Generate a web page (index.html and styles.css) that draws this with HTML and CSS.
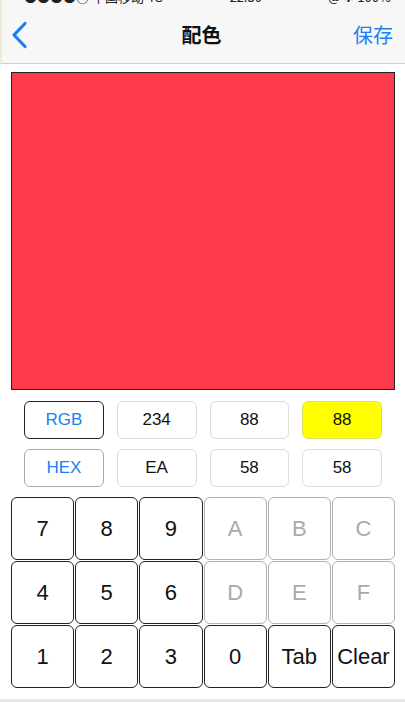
FILE: index.html
```html
<!DOCTYPE html>
<html lang="zh">
<head>
<meta charset="utf-8">
<link rel="stylesheet" href="styles.css">
</head>
<body>
<div class="app">
  <header class="nav">
    <div class="status"><div class="status-line"><span>●●●●○ 中国移动 4G</span><span>22:30</span><span>@ ✱ 100%</span></div></div>
    <div class="nav-row">
      <button class="back" aria-label="返回">
        <svg width="20" height="28" viewBox="0 0 20 28"><path d="M15 2.5 L4 14 L15 25.5" fill="none" stroke="#1a7ff5" stroke-width="3.2" stroke-linecap="round" stroke-linejoin="round"/></svg>
      </button>
      <h1 class="title">配色</h1>
      <button class="save">保存</button>
    </div>
  </header>
  <main class="content">
    <div class="swatch" style="background:#fd3a4b"></div>
    <div class="values">
      <div class="mode mode-active">RGB</div>
      <div class="val">234</div>
      <div class="val">88</div>
      <div class="val val-sel">88</div>
      <div class="mode">HEX</div>
      <div class="val">EA</div>
      <div class="val">58</div>
      <div class="val">58</div>
    </div>
    <div class="keypad">
      <div class="key">7</div><div class="key">8</div><div class="key">9</div>
      <div class="key key-off">A</div><div class="key key-off">B</div><div class="key key-off">C</div>
      <div class="key">4</div><div class="key">5</div><div class="key">6</div>
      <div class="key key-off">D</div><div class="key key-off">E</div><div class="key key-off">F</div>
      <div class="key">1</div><div class="key">2</div><div class="key">3</div>
      <div class="key">0</div><div class="key">Tab</div><div class="key">Clear</div>
    </div>
  </main>
  <div class="bottom"></div>
</div>
</body>
</html>
```

FILE: styles.css
```css
* { box-sizing: border-box; }
html, body { margin: 0; padding: 0; background: #fff; }
body {
  width: 405px;
  height: 702px;
  overflow: hidden;
  font-family: "Liberation Sans", "Noto Sans CJK SC", sans-serif;
  color: #111;
}
.app { display: flex; flex-direction: column; height: 702px; }
.nav {
  background: #f7f7f7;
  border-bottom: 1px solid #cfcfcf;
  border-left: 2px solid #efe9d8;
  height: 64px;
  flex: none;
}
.status { height: 6px; overflow: hidden; }
.status-line {
  margin-top: -11px;
  height: 16px;
  display: flex;
  justify-content: space-between;
  padding: 0 14px 0 22px;
  font-size: 13px;
  line-height: 16px;
  color: #222;
  font-family: "Noto Sans CJK SC", sans-serif;
}
.nav-row {
  height: 57px;
  display: flex;
  align-items: center;
  justify-content: space-between;
  padding: 0 12px 0 8px;
}
.back {
  background: none; border: 0; padding: 0; margin: 0;
  width: 24px; height: 28px;
  display: flex; align-items: center;
}
.title {
  margin: 0;
  font-family: "Noto Sans CJK SC", sans-serif;
  font-size: 20px;
  font-weight: 700;
  color: #111;
  margin-left: 16px;
}
.save {
  background: none; border: 0; padding: 0;
  font-family: "Noto Sans CJK SC", sans-serif;
  font-size: 20px;
  color: #1a7ff5;
}
.content {
  flex: 1;
  padding: 8px 10px 0 11px;
  display: flex;
  flex-direction: column;
}
.swatch {
  height: 318px;
  border: 1.5px solid #222;
}
.values {
  margin-top: 11px;
  padding: 0 13px;
  display: grid;
  grid-template-columns: repeat(4, 1fr);
  column-gap: 13px;
  row-gap: 10px;
}
.mode, .val {
  height: 38px;
  border-radius: 6px;
  display: flex;
  align-items: center;
  justify-content: center;
  font-size: 17px;
}
.mode { color: #1a7ff5; border: 1.5px solid #aaa; }
.mode-active { border-color: #222; }
.val { border: 1px solid #dcdcdc; color: #111; }
.val-sel { background: #ffff00; border-color: #e0e060; }
.keypad {
  margin-top: 10px;
  display: grid;
  grid-template-columns: repeat(6, 1fr);
  grid-auto-rows: 63px;
  gap: 1px;
}
.key {
  border: 1.5px solid #222;
  border-radius: 6px;
  display: flex;
  align-items: center;
  justify-content: center;
  font-size: 22px;
  color: #111;
}
.key-off { border-color: #b0b0b0; color: #aaa; }
.bottom { height: 3px; background: #e6e6ea; flex: none; }
```
